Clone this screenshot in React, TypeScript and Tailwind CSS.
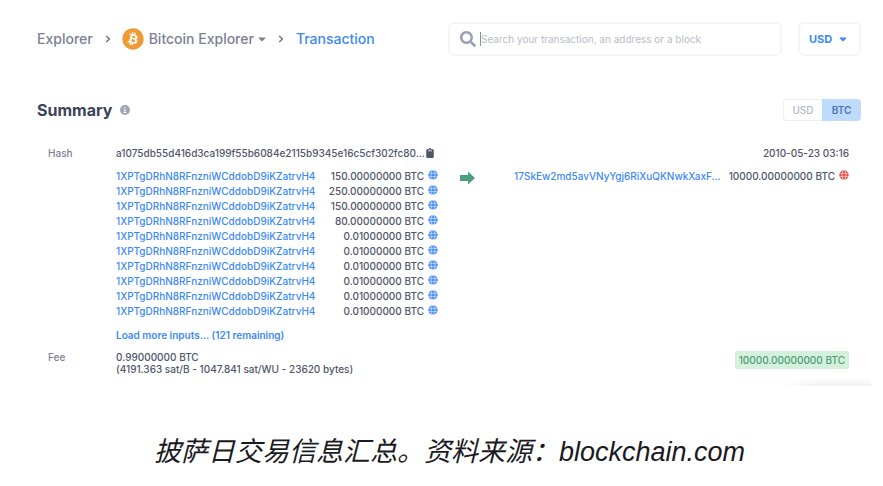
import React from "react";
import { FaBitcoin, FaCaretDown, FaClipboard, FaSearch } from "react-icons/fa";

const ADDRESS = "1XPTgDRhN8RFnzniWCddobD9iKZatrvH4";

const inputs = [
    "150.00000000 BTC",
    "250.00000000 BTC",
    "150.00000000 BTC",
    "80.00000000 BTC",
    "0.01000000 BTC",
    "0.01000000 BTC",
    "0.01000000 BTC",
    "0.01000000 BTC",
    "0.01000000 BTC",
    "0.01000000 BTC",
];

const Globe: React.FC<{ className: string }> = ({ className }) => (
    <svg viewBox="0 0 20 20" className={className} aria-hidden="true">
        <circle cx="10" cy="10" r="9.5" fill="currentColor" />
        <g fill="none" stroke="#fff" strokeOpacity="0.7" strokeWidth="1.4">
            <ellipse cx="10" cy="10" rx="4" ry="9.5" />
            <path d="M0 6.800h20M0 13.200h20" />
        </g>
    </svg>
);

const Chevron: React.FC = () => (
    <svg viewBox="0 0 6 8" className="h-2 w-1.5 text-[#6b7286]" aria-hidden="true">
        <path d="M1.2 1l3.2 3-3.2 3" fill="none" stroke="currentColor" strokeWidth="1.4" />
    </svg>
);

const Header: React.FC = () => (
    <header className="flex items-center justify-between">
        <nav className="flex items-center text-sm font-medium text-[#7b8196]">
            <a href="#explorer">Explorer</a>
            <span className="ml-3 mr-2.5">
                <Chevron />
            </span>
            <a href="#bitcoin" className="flex items-center gap-1">
                <FaBitcoin className="mx-px size-[22px] text-[#f09a37]" />
                Bitcoin Explorer
                <FaCaretDown className="-ml-0.5 size-3" />
            </a>
            <span className="ml-2.5 mr-3">
                <Chevron />
            </span>
            <a href="#transaction" className="text-[#3d89f5]">
                Transaction
            </a>
        </nav>
        <div className="flex items-center gap-4">
            <div className="flex h-[34px] w-[334px] items-center rounded-md border-2 border-[#f4f5f7] pl-[10px]">
                <label htmlFor="search">
                    <FaSearch className="size-4 text-[#9ca1b2]" aria-label="Search" />
                </label>
                <span className="ml-1 h-[14px] w-px bg-[#8b90a2]" />
                <input
                    id="search"
                    type="text"
                    placeholder="Search your transaction, an address or a block"
                    className="min-w-0 flex-1 text-[10px] outline-none placeholder:text-[#b9bcc8]"
                />
            </div>
            <div className="relative">
                <select
                    aria-label="Currency"
                    className="h-[34px] w-[63px] appearance-none rounded-md border-2 border-[#f4f5f7] bg-white pl-[9px] text-[11px] font-bold text-[#3d89f5]"
                >
                    <option>USD</option>
                </select>
                <FaCaretDown className="pointer-events-none absolute top-[11px] right-3 size-3 text-[#3d89f5]" />
            </div>
        </div>
    </header>
);

export default function App() {
    return (
        <main className="bg-white font-['Inter',sans-serif]">
            <section className="relative mr-3 overflow-hidden pt-[22px] pr-[10px] pb-[11px] pl-[37px]">
                <Header />

                <div className="mt-[42px] flex items-center justify-between">
                    <h1 className="flex items-center gap-2 text-base font-bold text-[#3c4358]">
                        Summary
                        <svg viewBox="0 0 20 20" className="size-[10px] text-[#a0a5b5]" aria-hidden="true">
                            <circle cx="10" cy="10" r="10" fill="currentColor" />
                            <path d="M10 4v3M7.500 9.500H10V15M7 15h6" fill="none" stroke="#fff" strokeWidth="2" />
                        </svg>
                    </h1>
                    <div className="flex h-[22px] text-[10px] font-medium">
                        <button type="button" className="w-[39px] rounded-l-sm border border-r-0 border-[#eceef2] text-[#b3b7c4]">
                            USD
                        </button>
                        <button type="button" className="w-[39px] rounded-r-sm bg-[#bfdbfb] font-semibold text-[#4a76b8]">
                            BTC
                        </button>
                    </div>
                </div>

                <div className="mt-[25px] grid grid-cols-[68px_322px_1fr] pr-3 pl-[11px] text-[10px] leading-3 font-medium text-[#50566a]">
                    <div className="text-[#7b8196]">Hash</div>
                    <div className="flex items-center justify-between pr-1">
                        <span>a1075db55d416d3ca199f55b6084e2115b9345e16c5cf302fc80...</span>
                        <button type="button" aria-label="Copy hash">
                            <FaClipboard className="size-[10px] text-[#50566a]" />
                        </button>
                    </div>
                    <div className="text-right">2010-05-23 03:16</div>

                    <div />
                    <div className="mt-[10px]">
                        <ul className="leading-[15px]">
                            {inputs.map((amount, i) => (
                                <li key={i} className="flex items-start">
                                    <a href="#address" className="text-[#3d89f5]">
                                        {ADDRESS}
                                    </a>
                                    <span className="ml-auto">{amount}</span>
                                    <Globe className="mt-px ml-1 size-[10px] text-[#4d8ff5]" />
                                </li>
                            ))}
                        </ul>
                        <a href="#more" className="mt-[10px] block font-semibold text-[#3d89f5]">
                            Load more inputs... (121 remaining)
                        </a>
                    </div>
                    <div className="mt-[10px] flex items-start pl-[22px] leading-[15px]">
                        <svg viewBox="0 0 15 14" className="mt-0.5 h-[14px] w-[15px] text-[#4c9f7b]" aria-hidden="true">
                            <path d="M0 4h8V0.500L15 7l-7 6.500v-3.500H0z" fill="currentColor" />
                        </svg>
                        <a href="#output" className="ml-auto text-[#3d89f5]">
                            17SkEw2md5avVNyYgj6RiXuQKNwkXaxF...
                        </a>
                        <span className="ml-2">10000.00000000 BTC</span>
                        <Globe className="mt-px ml-1 size-[10px] text-[#e0574c]" />
                    </div>

                    <div className="mt-[10px] text-[#7b8196]">Fee</div>
                    <div className="mt-[10px]">
                        <p>0.99000000 BTC</p>
                        <p>(4191.363 sat/B - 1047.841 sat/WU - 23620 bytes)</p>
                    </div>
                    <div className="mt-[10px] text-right">
                        <span className="inline-block rounded-xs bg-[#d5f0dc] px-1 py-[3px] text-[#4c9f7b]">
                            10000.00000000 BTC
                        </span>
                    </div>
                </div>

                {/* top shadow of the chat bubble cut off by the edge */}
                <div className="absolute right-0 bottom-0 h-2 w-[90px] bg-linear-to-t from-[#f1f1f1] to-white mask-l-from-60%" />
            </section>

            <p className="mt-[46px] pl-4 text-center font-['Liberation_Sans','Noto_Sans_CJK_SC',sans-serif] text-[27px] leading-10 text-[#1a1a22] italic">
                披萨日交易信息汇总。资料来源：blockchain.com
            </p>
        </main>
    );
}
